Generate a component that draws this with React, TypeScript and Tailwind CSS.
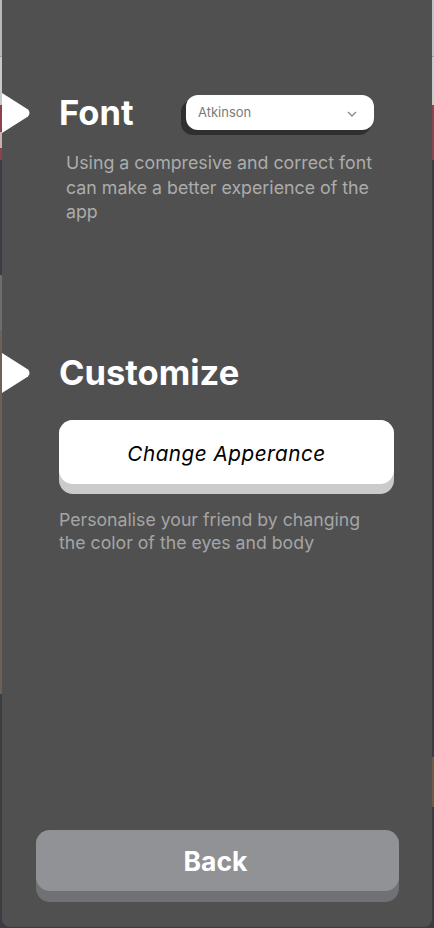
import React from "react";

const Arrow = () => (
  <svg width="29" height="40" viewBox="0 0 29 40" className="block shrink-0">
    <path d="M0 0 L26 16.5 Q29 20 26 23.5 L0 40 Z" fill="#ffffff" />
  </svg>
);

export default function App() {
  return (
    <div
      className="w-[434px] h-[928px] flex overflow-hidden bg-[#3b3b42]"
      style={{ fontFamily: "Inter, 'Noto Sans', sans-serif" }}
    >
      {/* left background strip */}
      <div className="w-[2px] h-full flex flex-col shrink-0">
        <div className="h-[56px] bg-[#b9b9b9]" />
        <div className="h-[1px] bg-[#9a9a9a]" />
        <div className="h-[48px] bg-[#c9c9c9]" />
        <div className="h-[27px] bg-[#8b4249]" />
        <div className="h-[16px] bg-[#c7b1b3]" />
        <div className="h-[12px] bg-[#8b4249]" />
        <div className="h-[115px] bg-[#3c3c44]" />
        <div className="h-[55px] bg-[#6e6e72]" />
        <div className="h-[364px] bg-[#6f6159]" />
        <div className="flex-1 bg-[#3b3b42]" />
      </div>

      {/* panel */}
      <div className="flex-1 h-[927px] bg-[#505050] rounded-b-[8px] flex flex-col">
        {/* Font row */}
        <div className="mt-[93px] h-[40px] flex items-center">
          <Arrow />
          <div className="ml-[28px] text-[34.5px] font-bold text-white leading-none w-[128px]">
            Font
          </div>
          <div className="relative w-[188px] h-[35px] -mt-[1px] ml-[-1px]">
            <div className="absolute left-[-5px] top-[5px] w-[190px] h-[35px] rounded-[12px] bg-[#2f2f2f]" />
            <div className="absolute inset-0 rounded-[12px] bg-white flex items-center pl-[12px] pr-[17px]">
              <span className="text-[13px] text-[#7a7a7a] flex-1">Atkinson</span>
              <svg width="10" height="6" viewBox="0 0 10 6" className="block mt-[2px]">
                <path d="M1 1 L5 5 L9 1" fill="none" stroke="#8a8a8a" strokeWidth="1.3" />
              </svg>
            </div>
          </div>
        </div>
        <p className="mt-[18px] ml-[64px] w-[318px] text-[17.8px] leading-[24.5px] text-[#acacac]">
          Using a compresive and correct font can make a better experience of the app
        </p>

        {/* Customize */}
        <div className="mt-[128px] h-[41px] flex items-center">
          <Arrow />
          <div className="ml-[28px] text-[34.5px] font-bold text-white leading-none">
            Customize
          </div>
        </div>
        <div className="mt-[26px] ml-[57px] w-[335px] h-[74px] rounded-[14px] bg-[#cbcbcb] flex flex-col">
          <div className="h-[64px] rounded-[14px] bg-white flex items-center justify-center pt-[4px]">
            <span className="text-[20.7px] italic text-black tracking-[0.5px]">
              Change Apperance
            </span>
          </div>
        </div>
        <p className="mt-[14px] ml-[57px] w-[315px] text-[17.7px] leading-[23px] text-[#a5a5a5]">
          Personalise your friend by changing the color of the eyes and body
        </p>

        <div className="flex-1" />

        {/* Back */}
        <div className="mb-[25px] ml-[34px] w-[363px] h-[72px] rounded-[14px] bg-[#707175] flex flex-col">
          <div className="h-[61px] rounded-[14px] bg-[#909296] flex items-center justify-center">
            <span className="text-[26.5px] font-bold text-white mt-[2px] mr-[4px]">Back</span>
          </div>
        </div>
      </div>

      {/* right background strip */}
      <div className="w-[2px] h-full flex flex-col shrink-0">
        <div className="h-[56px] bg-[#c3c3c3]" />
        <div className="h-[1px] bg-[#a0a0a0]" />
        <div className="h-[48px] bg-[#cbcbcb]" />
        <div className="h-[55px] bg-[#8a464d]" />
        <div className="h-[597px] bg-[#3b3b42]" />
        <div className="h-[50px] bg-[#6b5b4c]" />
        <div className="flex-1 bg-[#3b3b42]" />
      </div>
    </div>
  );
}
